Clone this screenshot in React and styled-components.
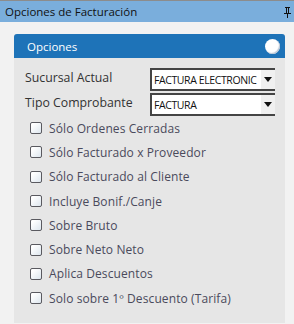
import styled, { createGlobalStyle } from 'styled-components';

const GlobalStyle = createGlobalStyle`
  html, body {
    margin: 0;
    padding: 0;
    background: #f2f2f2;
  }
  body {
    font-family: "Open Sans", "Noto Sans", sans-serif;
  }
`;

const Window = styled.div`
  width: 294px;
  height: 324px;
  background: #f2f2f2;
  border-top: 1px solid #8c8c8c;
  box-sizing: border-box;
  overflow: hidden;
`;

const TitleBar = styled.div`
  height: 21px;
  background: #7aaedc;
  display: flex;
  align-items: center;
  justify-content: space-between;
  padding: 0 2px 0 5px;
  font-size: 11.5px;
  color: #111;
`;

const Content = styled.div`
  padding: 12px 9px 0 14px;
`;

const Panel = styled.div`
  width: 271px;
  background: #e6e6e6;
  border-radius: 3px 3px 0 0;
  padding-bottom: 13px;
`;

const PanelHeader = styled.div`
  height: 24px;
  background: #1e73b8;
  border-radius: 3px 3px 0 0;
  display: flex;
  align-items: center;
  justify-content: space-between;
  padding: 0 5px 0 13px;
  color: #fff;
  font-size: 11.5px;
`;

const Circle = styled.span`
  width: 15px;
  height: 15px;
  border-radius: 50%;
  background: #fff;
  box-shadow: inset -1px -1px 1px #b8c4d4;
`;

const Fields = styled.div`
  display: flex;
  flex-direction: column;
  gap: 2px;
  padding: 10px 11px 0 11px;
`;

const FieldRow = styled.div`
  display: flex;
  align-items: center;
  justify-content: space-between;
  font-size: 12.3px;
  color: #333;
`;

const Label = styled.span`
  margin-top: -4px;
`;

const Select = styled.div`
  width: 123px;
  height: 19px;
  border: 2px solid #444;
  border-right-width: 0;
  background: #fff;
  display: flex;
  align-items: center;
  font-size: 10.5px;
  color: #111;
  letter-spacing: -0.4px;
  margin-right: -1px;
`;

const SelectText = styled.span`
  flex: 1;
  padding-left: 2px;
  white-space: nowrap;
`;

const Arrow = styled.span`
  width: 14px;
  align-self: stretch;
  background: #f0f0f0;
  display: flex;
  align-items: center;
  justify-content: center;
  &::after {
    content: '';
    border-left: 4px solid transparent;
    border-right: 4px solid transparent;
    border-top: 5px solid #111;
  }
`;

const Checks = styled.div`
  display: flex;
  flex-direction: column;
  padding: 0 0 0 16px;
`;

const CheckRow = styled.label`
  height: 24.3px;
  display: flex;
  align-items: center;
  gap: 7px;
  font-size: 12px;
  color: #4a4a5c;
  letter-spacing: 0.1px;
`;

const Box = styled.span`
  width: 10px;
  height: 10px;
  border: 1px solid #5a5a60;
  border-radius: 2px;
  background: linear-gradient(135deg, #ffffff 20%, #dde6ee 100%);
  flex-shrink: 0;
`;

const PinIcon = () => (
  <svg width="9" height="12" viewBox="0 0 9 12">
    <path d="M2 1h5v1H6v5h2v1H5v4H4V8H1V7h2V2H2z" fill="#111" />
    <rect x="4" y="2" width="1" height="5" fill="#7aaedc" />
  </svg>
);

const options = [
  'Sólo Ordenes Cerradas',
  'Sólo Facturado x Proveedor',
  'Sólo Facturado al Cliente',
  'Incluye Bonif./Canje',
  'Sobre Bruto',
  'Sobre Neto Neto',
  'Aplica Descuentos',
  'Solo sobre 1º Descuento (Tarifa)',
];

export default function App() {
  return (
    <>
      <GlobalStyle />
      <Window>
        <TitleBar>
          <span>Opciones de Facturación</span>
          <PinIcon />
        </TitleBar>
        <Content>
          <Panel>
            <PanelHeader>
              <span>Opciones</span>
              <Circle />
            </PanelHeader>
            <Fields>
              <FieldRow>
                <Label>Sucursal Actual</Label>
                <Select>
                  <SelectText>FACTURA ELECTRONIC</SelectText>
                  <Arrow />
                </Select>
              </FieldRow>
              <FieldRow>
                <Label>Tipo Comprobante</Label>
                <Select>
                  <SelectText>FACTURA</SelectText>
                  <Arrow />
                </Select>
              </FieldRow>
            </Fields>
            <Checks>
              {options.map((o) => (
                <CheckRow key={o}>
                  <Box />
                  {o}
                </CheckRow>
              ))}
            </Checks>
          </Panel>
        </Content>
      </Window>
    </>
  );
}
